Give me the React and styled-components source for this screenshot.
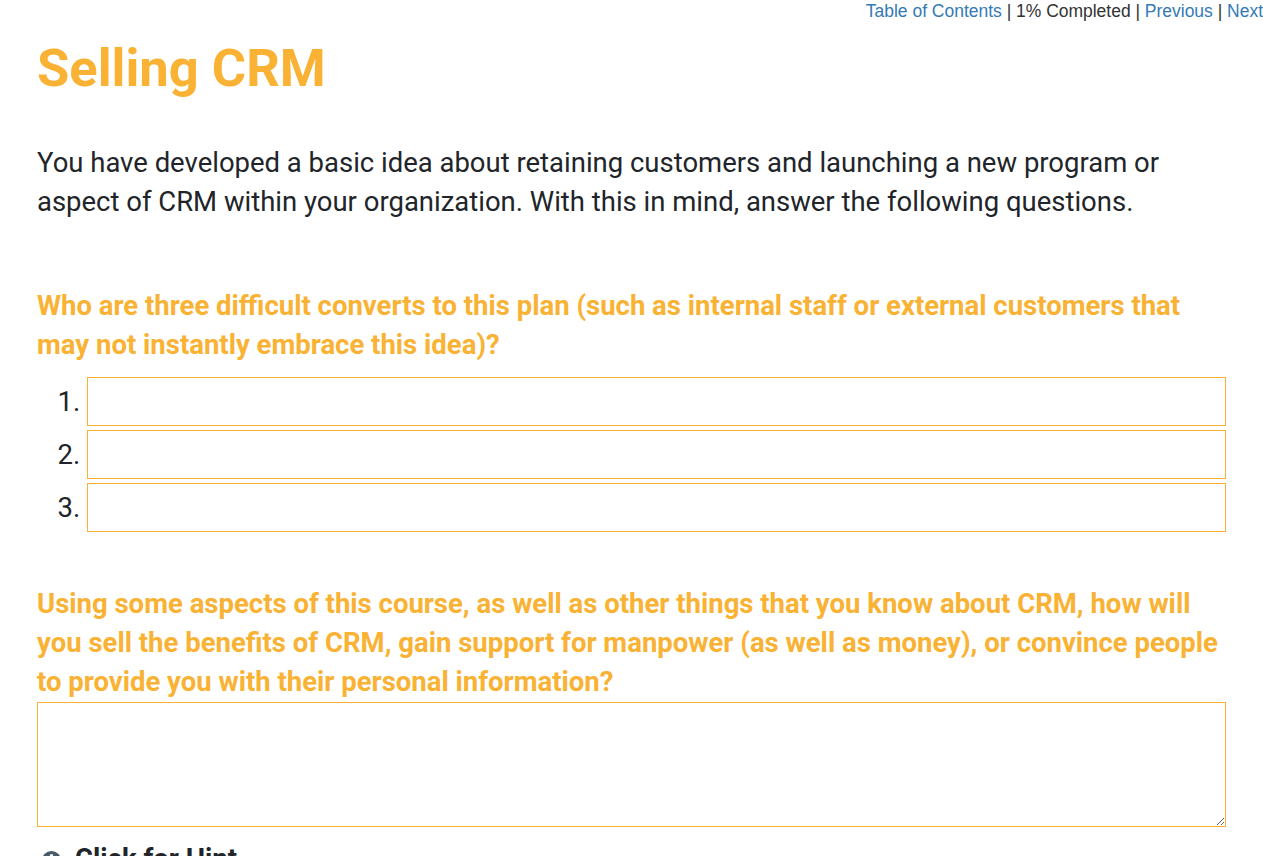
import React from "react";
import styled, { createGlobalStyle } from "styled-components";

const Global = createGlobalStyle`
  html, body { margin: 0; padding: 0; height: 856px; overflow: hidden; background: #fff; }
  body { font-family: Roboto, "Liberation Sans", sans-serif; color: #212529; }
`;

const Page = styled.div`
  display: flex;
  flex-direction: column;
`;

const TopBar = styled.div`
  display: flex;
  justify-content: flex-end;
  font-family: "Liberation Sans", Arial, sans-serif;
  font-size: 17.485px;
  line-height: 22px;
  color: #333;
  white-space: pre;
`;

const NavLink = styled.a`
  color: #337ab7;
  text-decoration: none;
`;

const Content = styled.main`
  padding: 0 37px;
  display: flex;
  flex-direction: column;
`;

const Title = styled.h1`
  margin: 12px 0 0;
  font-size: 52.5px;
  font-weight: 700;
  line-height: 68px;
  color: #f9b233;
`;

const Intro = styled.p`
  margin: 42px 0 0;
  font-size: 27.47px;
  line-height: 39px;
`;

const Question = styled.h2`
  margin: ${(p) => p.$top}px 0 0;
  font-size: 27.5px;
  font-weight: 700;
  line-height: 39px;
  color: #f9b233;
`;

const AnswerList = styled.ol`
  margin: 13px 0 0;
  padding: 0 0 0 50px;
  font-size: 27.5px;
`;

const AnswerItem = styled.li`
  height: 49px;
  line-height: 49px;
  margin-bottom: 4px;
  &::marker { color: #212529; }
`;

const AnswerInput = styled.input`
  display: block;
  box-sizing: border-box;
  width: 100%;
  height: 49px;
  margin: 0;
  padding: 6px 12px;
  border: 1px solid #f9b233;
  border-radius: 0;
  background: #fff;
  outline: none;
  font: inherit;
`;

const AnswerArea = styled.textarea`
  display: block;
  box-sizing: border-box;
  width: 100%;
  height: 125px;
  margin: 1px 0 0;
  padding: 6px 12px;
  border: 1px solid #f9b233;
  border-radius: 0;
  background: #fff;
  outline: none;
  font: inherit;
  resize: vertical;
`;

const Hint = styled.div`
  display: flex;
  align-items: center;
  gap: 14px;
  margin: 12px 0 0 5px;
  font-size: 27.5px;
  font-weight: 700;
  line-height: 39px;
`;

const HintIcon = styled.svg`
  width: 19px;
  height: 19px;
  flex: none;
  margin-top: 3px;
`;

export default function App() {
  return (
    <Page>
      <Global />
      <TopBar>
        <NavLink href="#">Table of Contents</NavLink>
        {" | 1% Completed | "}
        <NavLink href="#">Previous</NavLink>
        {" | "}
        <NavLink href="#">Next</NavLink>
      </TopBar>
      <Content>
        <Title>Selling CRM</Title>
        <Intro>
          You have developed a basic idea about retaining customers and launching a new program or aspect of CRM within your organization. With this in mind, answer the following questions.
        </Intro>
        <Question $top={64}>
          Who are three difficult converts to this plan (such as internal staff or external customers that may not instantly embrace this idea)?
        </Question>
        <AnswerList>
          <AnswerItem><AnswerInput type="text" /></AnswerItem>
          <AnswerItem><AnswerInput type="text" /></AnswerItem>
          <AnswerItem><AnswerInput type="text" /></AnswerItem>
        </AnswerList>
        <Question $top={48}>
          Using some aspects of this course, as well as other things that you know about CRM, how will you sell the benefits of CRM, gain support for manpower (as well as money), or convince people to provide you with their personal information?
        </Question>
        <AnswerArea />
        <Hint>
          <HintIcon viewBox="0 0 20 20" aria-hidden="true">
            <circle cx="10" cy="10" r="10" fill="#4a5a66" />
            <rect x="8.5" y="8" width="3" height="8" fill="#fff" />
            <circle cx="10" cy="5" r="1.8" fill="#fff" />
          </HintIcon>
          Click for Hint
        </Hint>
      </Content>
    </Page>
  );
}
